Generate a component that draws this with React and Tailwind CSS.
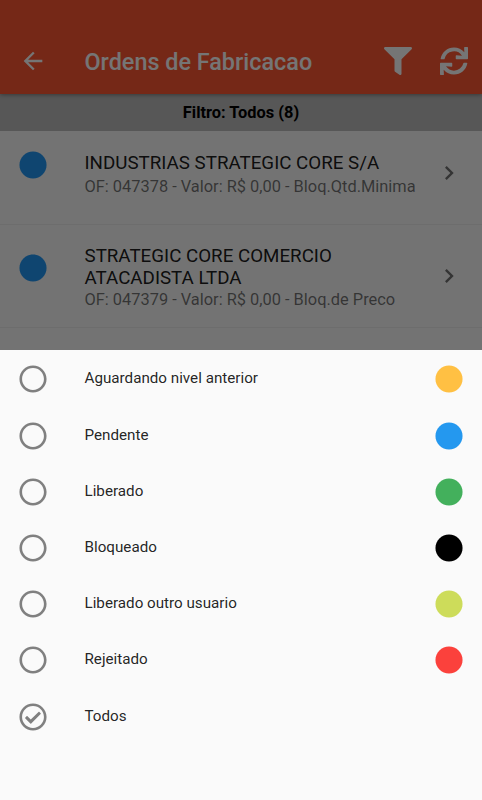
import { FaCircle, FaFilter, FaRegCheckCircle, FaRegCircle, FaSync } from 'react-icons/fa';
import { MdArrowBack, MdKeyboardArrowRight } from 'react-icons/md';

const orders = [
  {
    id: '047378',
    name: 'INDUSTRIAS STRATEGIC CORE S/A',
    detail: 'OF: 047378 - Valor: R$ 0,00 - Bloq.Qtd.Minima',
    height: 'h-[94px]',
    textOffset: 'pt-[21px]',
    detailOffset: 'mt-[3px]',
    iconOffset: 'pt-[20px]',
  },
  {
    id: '047379',
    name: 'STRATEGIC CORE COMERCIO ATACADISTA LTDA',
    detail: 'OF: 047379 - Valor: R$ 0,00 - Bloq.de Preco',
    height: 'h-[103px]',
    textOffset: 'pt-[20px]',
    detailOffset: 'mt-px',
    iconOffset: 'pt-[29px]',
  },
];

const filters = [
  { label: 'Aguardando nivel anterior', color: 'text-[#ffc043]' },
  { label: 'Pendente', color: 'text-[#2498ef]' },
  { label: 'Liberado', color: 'text-[#43b05c]' },
  { label: 'Bloqueado', color: 'text-black' },
  { label: 'Liberado outro usuario', color: 'text-[#cddc5a]' },
  { label: 'Rejeitado', color: 'text-[#fb413c]' },
  { label: 'Todos', color: null },
];

const Header = () => (
  <header className="relative z-10 h-[94px] pt-[28px] bg-[#ff5733] text-white shadow-[0_1px_4px_rgba(0,0,0,0.35)]">
    <div className="h-[66px] flex items-center pl-[18.75px] pr-[14px]">
      <MdArrowBack className="size-[28px] shrink-0" />
      <h1 className="ml-[37.75px] pt-[3px] flex-1 text-[23.4px] font-medium whitespace-nowrap">Ordens de Fabricacao</h1>
      <FaFilter className="size-[28px] mr-[28px]" />
      <FaSync className="size-[28px]" />
    </div>
  </header>
);

const OrderRow = ({ order }) => (
  <li className={`flex border-b border-black/5 pl-[18.75px] ${order.height}`}>
    <div className={`shrink-0 ${order.iconOffset}`}>
      <FaCircle className="size-[28px] text-[#2196f3]" />
    </div>
    <div className={`ml-[37.75px] w-[350.5px] shrink-0 pr-[9px] ${order.textOffset}`}>
      <p className="text-[18.75px] leading-[22px] text-black/90">{order.name}</p>
      <p className={`text-[16.4px] leading-[20px] text-black/55 whitespace-nowrap ${order.detailOffset}`}>
        {order.detail}
      </p>
    </div>
    <div className={order.iconOffset}>
      <MdKeyboardArrowRight className="mt-[8px] size-[28px] text-black/55" />
    </div>
  </li>
);

const FilterRow = ({ filter }) => {
  const Icon = filter.color ? FaRegCircle : FaRegCheckCircle;
  return (
    <li className="h-[56.2px] flex items-center px-[18.75px]">
      <Icon className="size-[28px] shrink-0 text-[#808080]" />
      <span className="ml-[37.75px] flex-1 pb-[1px] text-[15.2px] text-black/87">{filter.label}</span>
      {filter.color && <FaCircle className={`size-[28px] ${filter.color}`} />}
    </li>
  );
};

export default function App() {
  return (
    <div className="relative w-[482px] h-[800px] overflow-hidden bg-[#fafafa] font-['Roboto',sans-serif]">
      <Header />
      <div className="h-[37px] pt-[2px] flex items-center justify-center bg-[#bdbdbd] text-[16.4px] font-bold text-black">
        Filtro: Todos (8)
      </div>
      <ul>
        {orders.map((order) => (
          <OrderRow key={order.id} order={order} />
        ))}
      </ul>

      {/* Modal barrier and bottom sheet */}
      <div className="absolute inset-0 z-20 flex flex-col justify-end bg-black/54">
        <ul className="h-[450px] bg-[#fafafa] pt-[1.3px]">
          {filters.map((filter) => (
            <FilterRow key={filter.label} filter={filter} />
          ))}
        </ul>
      </div>
    </div>
  );
}
